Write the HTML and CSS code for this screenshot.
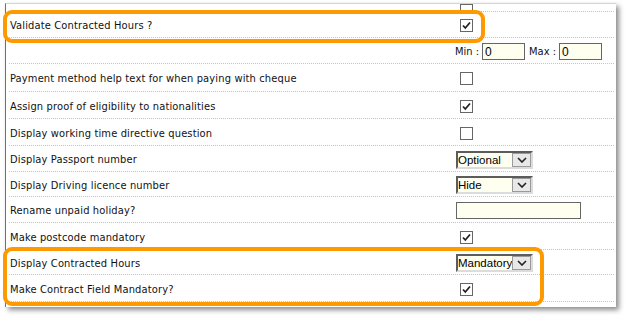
FILE: index.html
```html
<!DOCTYPE html>
<html lang="en">
<head>
    <meta charset="UTF-8">
    <title>Settings</title>
    <link rel="stylesheet" href="styles.css">
</head>
<body>
    <div class="panel">
        <div class="row frag"><span></span><span class="cb"></span></div>
        <div class="row">
            <label>Validate Contracted Hours ?</label>
            <span class="cb"><svg width="11" height="11" viewBox="0 0 11 11"><path d="M2 5.5 L4.3 8 L9 2.5" fill="none" stroke="#222" stroke-width="1.8"/></svg></span>
        </div>
        <div class="row">
            <span></span>
            <span class="range">Min : <input class="num" value="0"> Max : <input class="num" value="0"></span>
        </div>
        <div class="row h28">
            <label>Payment method help text for when paying with cheque</label>
            <span class="cb"></span>
        </div>
        <div class="row h27">
            <label>Assign proof of eligibility to nationalities</label>
            <span class="cb"><svg width="11" height="11" viewBox="0 0 11 11"><path d="M2 5.5 L4.3 8 L9 2.5" fill="none" stroke="#222" stroke-width="1.8"/></svg></span>
        </div>
        <div class="row h27">
            <label>Display working time directive question</label>
            <span class="cb"></span>
        </div>
        <div class="row">
            <label>Display Passport number</label>
            <span class="select">
                <select><option>Optional</option></select>
                <span class="arrow"><svg width="10" height="6" viewBox="0 0 10 6"><path d="M1 1 L5 5 L9 1" fill="none" stroke="#222" stroke-width="1.6"/></svg></span>
            </span>
        </div>
        <div class="row h25">
            <label>Display Driving licence number</label>
            <span class="select">
                <select><option>Hide</option></select>
                <span class="arrow"><svg width="10" height="6" viewBox="0 0 10 6"><path d="M1 1 L5 5 L9 1" fill="none" stroke="#222" stroke-width="1.6"/></svg></span>
            </span>
        </div>
        <div class="row">
            <label>Rename unpaid holiday?</label>
            <input class="text" value="">
        </div>
        <div class="row h27">
            <label>Make postcode mandatory</label>
            <span class="cb"><svg width="11" height="11" viewBox="0 0 11 11"><path d="M2 5.5 L4.3 8 L9 2.5" fill="none" stroke="#222" stroke-width="1.8"/></svg></span>
        </div>
        <div class="row h25">
            <label>Display Contracted Hours</label>
            <span class="select">
                <select><option>Mandatory</option></select>
                <span class="arrow"><svg width="10" height="6" viewBox="0 0 10 6"><path d="M1 1 L5 5 L9 1" fill="none" stroke="#222" stroke-width="1.6"/></svg></span>
            </span>
        </div>
        <div class="row h27">
            <label>Make Contract Field Mandatory?</label>
            <span class="cb"><svg width="11" height="11" viewBox="0 0 11 11"><path d="M2 5.5 L4.3 8 L9 2.5" fill="none" stroke="#222" stroke-width="1.8"/></svg></span>
        </div>
    </div>

    <div class="mark mark-1"></div>
    <div class="mark mark-2"></div>
</body>
</html>
```

FILE: styles.css
```css
* {
    box-sizing: border-box;
}
body {
    margin: 0;
    position: relative;
    width: 625px;
    height: 317px;
    overflow: hidden;
    background: #fff;
    font-family: "DejaVu Sans Condensed", "DejaVu Sans", sans-serif;
    font-stretch: condensed;
    font-size: 11px;
    color: #111;
}
.panel {
    margin: 3px 0 0 5px;
    width: 611px;
    height: 304px;
    background: #fff;
    border-left: 1px solid #707070;
    border-top: 1px solid #d4d4d4;
    box-shadow: 3px 3px 5px rgba(0, 0, 0, 0.45);
}
.row {
    display: grid;
    grid-template-columns: 446px 1fr;
    align-items: center;
    height: 26px;
    margin: 0 2px 0 3px;
    padding-top: 2px;
    border-bottom: 1px dotted #c4c4c4;
}
.row label {
    padding-left: 1px;
    letter-spacing: 0.15px;
}
.h25 { height: 25px; }
.h27 { height: 27px; }
.h28 { height: 28px; }
.frag {
    height: 8px;
    padding-top: 0;
    align-items: end;
    overflow: hidden;
}
.frag .cb {
    margin-bottom: 5px;
}
.cb {
    display: flex;
    align-items: center;
    justify-content: center;
    width: 13px;
    height: 13px;
    margin-left: 5px;
    border: 1px solid #666;
    background: #fff;
}
.range {
    display: flex;
    align-items: center;
    gap: 3px;
}
.num {
    width: 43px;
    height: 17px;
    border: 1px solid #666;
    background: #fffff0;
    font: 12px "Liberation Sans", sans-serif;
    padding: 0 2px;
    margin-right: 1px;
}
.text {
    width: 125px;
    height: 17px;
    margin-left: 1px;
    border: 1px solid #666;
    background: #fffff0;
}
.select {
    display: flex;
    width: 77px;
    height: 18px;
    margin-left: 1px;
    border: 2px solid;
    border-color: #5c5c5c #dcdcdc #dcdcdc #5c5c5c;
    background: #fffff0;
}
.select select {
    appearance: none;
    flex: 1;
    min-width: 0;
    height: 100%;
    padding: 0;
    border: 0;
    outline: 0;
    background: transparent;
    font: 11.5px "Liberation Sans", sans-serif;
    color: #000;
}
.arrow {
    display: flex;
    align-items: center;
    justify-content: center;
    width: 19px;
    background: #e8e8e8;
    border: 1px solid #9a9a9a;
}
.mark {
    position: absolute;
    left: 3px;
    border: 4px solid #ff9900;
    border-radius: 9px;
}
.mark-1 {
    top: 10px;
    width: 482px;
    height: 33px;
}
.mark-2 {
    top: 247px;
    width: 541px;
    height: 59px;
}
```
